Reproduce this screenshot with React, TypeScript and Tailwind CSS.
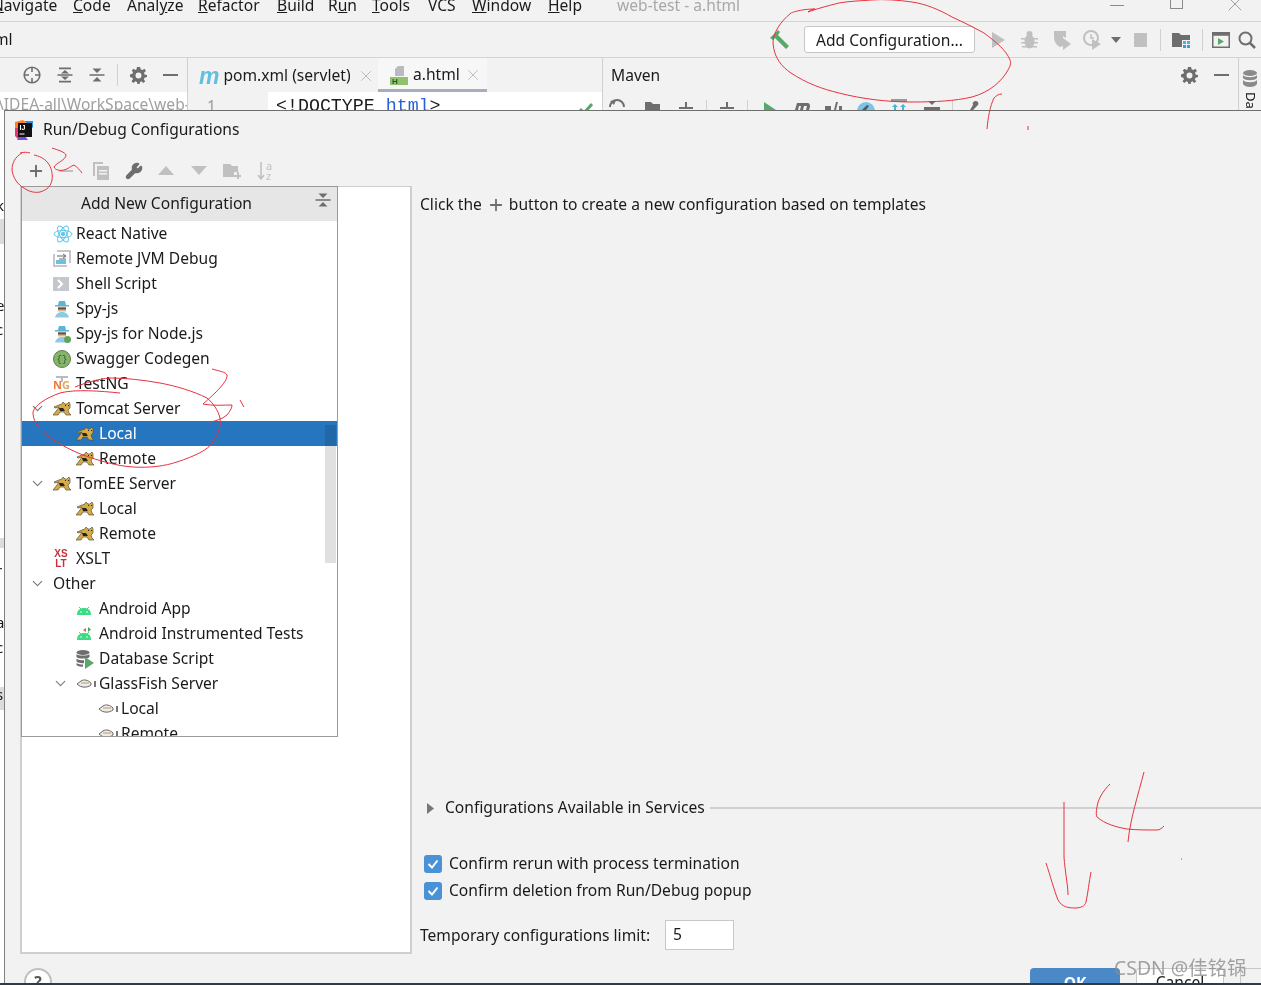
import React from 'react';
import { ChevronDown, Plus, Wrench, X } from 'lucide-react';

const font = { fontFamily: '"Noto Sans", "Noto Sans CJK SC", sans-serif' };

// --- small drawn icons ---
const TomcatIcon = () => (
  <svg width="18" height="14" viewBox="0 0 18 14">
    <path d="M9 2 L10 0 L12 2 H14 L16 0 L17 2 V6 L15 8 L16 11 L18 13 H13 L11 10 L7 10 L5 13 H0 L4 8 L6 5 L2 6 L1 5 L6 3 Z" fill="#d4aa4a" stroke="#5a5030" strokeWidth="0.7" />
    <path d="M6 6 L10 6 L12 9 L7 9 Z" fill="#26231a" />
    <path d="M12 3 H13 V4 H12 Z M15 3 H16 V4 H15 Z" fill="#26231a" />
  </svg>
);

const FishIcon = () => (
  <svg width="21" height="11" viewBox="0 0 21 11">
    <path d="M1 6 L5 3 C8 1 12 2 15 5 L15 7 C11 10 5 10 1 6 Z" fill="#ececec" stroke="#666" strokeWidth="1" />
    <path d="M5 5 H13" stroke="#d6b98a" strokeWidth="1.6" />
    <path d="M18 3 H20 V9 H18 Z" fill="#777" />
  </svg>
);

const ReactIcon = () => (
  <svg width="20" height="20" viewBox="0 0 20 20" fill="none" stroke="#5fc8ea" strokeWidth="1">
    <ellipse cx="10" cy="10" rx="9" ry="3.6" />
    <ellipse cx="10" cy="10" rx="9" ry="3.6" transform="rotate(60 10 10)" />
    <ellipse cx="10" cy="10" rx="9" ry="3.6" transform="rotate(120 10 10)" />
    <circle cx="10" cy="10" r="1.8" fill="#5fc8ea" />
  </svg>
);

const RemoteIcon = () => (
  <svg width="18" height="18" viewBox="0 0 18 18">
    <path d="M1 4 V16 H14 M4 1 H17 V13" fill="none" stroke="#b5b5b5" strokeWidth="1.5" />
    <rect x="3" y="10" width="10" height="4" fill="#6fc0e0" />
    <path d="M4 6 H12 M10 4 L13 6 L10 8 M13 9 H6" fill="none" stroke="#666" strokeWidth="1" />
  </svg>
);

const ShellIcon = () => (
  <svg width="16" height="14" viewBox="0 0 16 14">
    <rect x="0" y="0" width="16" height="14" fill="#c4c8cc" />
    <path d="M5 3 L9 7 L5 11" fill="none" stroke="#fff" strokeWidth="2" />
  </svg>
);

const SpyIcon = ({ dot }: { dot?: boolean }) => (
  <svg width="18" height="18" viewBox="0 0 18 18">
    <path d="M6 1 H12 L13 5 H16 V6.5 H2 V5 H5 Z" fill="#5ab5d6" />
    <rect x="5" y="6.5" width="8" height="5" fill="#e3b48e" />
    <rect x="5" y="7.5" width="8" height="2" fill="#555" />
    <path d="M2 17.5 C3 13.5 6 12 9 12 C12 12 15 13.5 16 17.5 Z" fill="#8ccbe2" />
    {dot && <circle cx="14.5" cy="14.5" r="3.5" fill="#62a35c" />}
  </svg>
);

const SwaggerIcon = () => (
  <svg width="18" height="18" viewBox="0 0 18 18">
    <circle cx="9" cy="9" r="8.5" fill="#85b56b" stroke="#5f7d55" strokeWidth="1" />
    <text x="9" y="12" textAnchor="middle" fontSize="9" fill="#2f4a2a" fontFamily="Liberation Mono, monospace">{'{}'}</text>
  </svg>
);

const TestNgIcon = () => (
  <div className="relative w-[18px] h-[15px] leading-none">
    <div className="absolute left-[3px] top-0 w-[12px] h-[2px] bg-[#bbb]" />
    <div className="absolute left-[8px] top-0 w-[2px] h-[6px] bg-[#bbb]" />
    <span className="absolute left-0 top-[3px] text-[11px] font-bold text-[#ee7a3a]">N</span>
    <span className="absolute left-[9px] top-[3px] text-[11px] font-bold text-[#e0a860]">G</span>
  </div>
);

const XsltIcon = () => (
  <div className="flex flex-col items-center text-[#c8303a] text-[10px] font-bold leading-[10px] w-[16px]" style={{ fontFamily: '"Liberation Sans", sans-serif' }}>
    <span>XS</span>
    <span>LT</span>
  </div>
);

const AndroidIcon = ({ badge }: { badge?: boolean }) => (
  <svg width="16" height="16" viewBox="0 0 16 16">
    <path d="M1 14 C1 9 4 7 8 7 C12 7 15 9 15 14 Z" fill="#3ddc84" />
    <path d="M3 6 L5 8 M13 6 L11 8" stroke="#3ddc84" strokeWidth="1" />
    <circle cx="5" cy="11" r="0.8" fill="#fff" />
    <circle cx="11" cy="11" r="0.8" fill="#fff" />
    {badge && <path d="M10 2 L7 4 L10 6 Z" fill="#e0603a" />}
    {badge && <path d="M12 1 L15 3.5 L12 6 Z" fill="#4f9e5a" />}
  </svg>
);

const DbScriptIcon = () => (
  <svg width="18" height="20" viewBox="0 0 18 20">
    <ellipse cx="7" cy="3.5" rx="6.5" ry="2.5" fill="#6e6e6e" />
    <path d="M0.5 5 V8 C2 10 12 10 13.5 8 V5 C12 7 2 7 0.5 5 Z" fill="#6e6e6e" />
    <path d="M0.5 9.5 V12.5 C2 14 6 14.5 8 14 V11 C5 11.5 2 11 0.5 9.5 Z" fill="#6e6e6e" />
    <path d="M0.5 14 V16 C2 17.5 5 18 7 17.5 V15.5 C5 15.5 2 15.5 0.5 14 Z" fill="#6e6e6e" />
    <path d="M9 8 L18 14 L9 20 Z" fill="#59a869" />
  </svg>
);

const GearIcon = ({ size = 17 }: { size?: number }) => (
  <svg width={size} height={size} viewBox="0 0 16 16" fill="#6e6e6e">
    <path fillRule="evenodd" d="M6.5 0 H9.5 L10 2.2 L11.6 2.9 L13.6 1.7 L15 3.8 L13.3 5.2 L13.6 7 L16 7.6 V9.4 L13.7 10 L13 11.6 L14.3 13.6 L12.4 15 L10.8 13.4 L9.5 14 L9 16 H7 L6.5 14 L5 13.4 L3.2 15 L1.4 13.4 L2.8 11.6 L2.2 10 L0 9.4 V7 L2.2 6.4 L2.9 5 L1.6 3.2 L3.4 1.6 L5 2.8 L6.2 2.2 Z M8 5.2 A2.8 2.8 0 1 0 8 10.8 A2.8 2.8 0 1 0 8 5.2 Z" />
  </svg>
);

const ExpandAllIcon = () => (
  <svg width="16" height="16" viewBox="0 0 16 16" fill="#6e6e6e">
    <path d="M2 0.5 H14 V2.2 H2 Z M8 3 L12 6.5 H4 Z M0.5 7.2 H15.5 V8.8 H0.5 Z M4 9.5 H12 L8 13 Z M2 13.8 H14 V15.5 H2 Z" />
  </svg>
);

const CollapseAllIcon = ({ color = '#6e6e6e' }: { color?: string }) => (
  <svg width="16" height="16" viewBox="0 0 16 16" fill={color}>
    <path d="M0.5 7.2 H15.5 V8.8 H0.5 Z M8 6 L3.5 1.5 H12.5 Z M3.5 14.5 L8 10 L12.5 14.5 Z" />
  </svg>
);

const TargetIcon = () => (
  <svg width="18" height="18" viewBox="0 0 18 18" fill="none" stroke="#6e6e6e" strokeWidth="1.6">
    <circle cx="9" cy="9" r="7.8" />
    <path d="M9 1 V6 M9 12 V17 M1 9 H6 M12 9 H17" />
  </svg>
);

// the Maven tool window's icon row, only its top part shows above the dialog
const MavenToolbar = () => (
  <svg width="380" height="18" viewBox="0 0 380 18" fill="#6e6e6e" className="shrink-0">
    <path d="M9 15 A7 7 0 1 1 23 15" fill="none" stroke="#6e6e6e" strokeWidth="2" transform="translate(-2 0)" />
    <path d="M7 9 L13 8 L11 13 Z" />
    <path d="M42 10 H48 L50 12 H57 V18 H42 Z" />
    <path d="M82 10 H84 V15 H90 V17 H76 V15 H82 Z" />
    <path d="M103 8 H104 V18 H103 Z" fill="#d0d0d0" />
    <path d="M123 10 H125 V15 H131 V17 H117 V15 H123 Z" />
    <path d="M144 8 H145 V18 H144 Z" fill="#d0d0d0" />
    <path d="M161 10 L173 18 H161 Z" fill="#59a869" />
    <path d="M192 18 L194 11 H204 C207 11 207 13 207 15 L206 18 H203 L204 14 H201 L200 18 H197 L198 14 H196 L195 18 Z" />
    <path d="M222 14 H228 V18 H222 Z M231 18 L233 10 H235 L233 18 Z M236 14 H239 V18 H236 Z" />
    <circle cx="263" cy="19" r="9" fill="#7cc4e6" />
    <path d="M264 13 L266 14 L263 18 H259 Z" fill="#4a5a66" />
    <rect x="288" y="7" width="16" height="3" fill="#9a9a9a" />
    <path d="M292 12 L295 15 H289 Z M300 12 L303 15 H297 Z M291 15 H293 V18 H291 Z M299 15 H301 V18 H299 Z" fill="#40b6e0" />
    <path d="M325 9 H333 L329 13 Z M321 15 H337 V18 H321 Z" />
    <path d="M349 8 H350 V18 H349 Z" fill="#d0d0d0" />
    <path d="M372 9 C375 9 376 11 375 13 L373 15 L370 18 H367 L370 13 C369 11 370 10 372 9 Z" />
  </svg>
);

const Minus = () => <div className="w-[15px] h-[2px] bg-[#6e6e6e]" />;
const Sep = () => <div className="w-px h-[22px] bg-[#d0d0d0]" />;

type Row = { label: string; level: 0 | 1 | 2; icon?: React.ReactNode; open?: boolean; selected?: boolean };

const rows: Row[] = [
  { label: 'React Native', level: 0, icon: <ReactIcon /> },
  { label: 'Remote JVM Debug', level: 0, icon: <RemoteIcon /> },
  { label: 'Shell Script', level: 0, icon: <ShellIcon /> },
  { label: 'Spy-js', level: 0, icon: <SpyIcon /> },
  { label: 'Spy-js for Node.js', level: 0, icon: <SpyIcon dot /> },
  { label: 'Swagger Codegen', level: 0, icon: <SwaggerIcon /> },
  { label: 'TestNG', level: 0, icon: <TestNgIcon /> },
  { label: 'Tomcat Server', level: 0, icon: <TomcatIcon />, open: true },
  { label: 'Local', level: 1, icon: <TomcatIcon />, selected: true },
  { label: 'Remote', level: 1, icon: <TomcatIcon /> },
  { label: 'TomEE Server', level: 0, icon: <TomcatIcon />, open: true },
  { label: 'Local', level: 1, icon: <TomcatIcon /> },
  { label: 'Remote', level: 1, icon: <TomcatIcon /> },
  { label: 'XSLT', level: 0, icon: <XsltIcon /> },
  { label: 'Other', level: 0, open: true },
  { label: 'Android App', level: 1, icon: <AndroidIcon /> },
  { label: 'Android Instrumented Tests', level: 1, icon: <AndroidIcon badge /> },
  { label: 'Database Script', level: 1, icon: <DbScriptIcon /> },
  { label: 'GlassFish Server', level: 1, icon: <FishIcon />, open: true },
  { label: 'Local', level: 2, icon: <FishIcon /> },
  { label: 'Remote', level: 2, icon: <FishIcon /> },
];

const levelPad = { 0: 'pl-[8px]', 1: 'pl-[31px]', 2: 'pl-[53px]' };

const TreeRow = ({ row }: { row: Row }) => (
  <div className={`h-[25px] shrink-0 flex items-center ${levelPad[row.level]} ${row.selected ? 'bg-[#2675bf] text-white' : ''}`}>
    <div className="w-[23px] shrink-0">
      {row.open && <ChevronDown size={17} strokeWidth={1.6} className="text-[#777] -ml-px" />}
    </div>
    {row.icon ? (
      <div className="w-[23px] shrink-0 flex items-center">{row.icon}</div>
    ) : null}
    <span>{row.label}</span>
  </div>
);

const ConfigPopup = () => (
  <div className="absolute left-[16px] top-[75px] w-[317px] h-[551px] bg-white border border-[#9a9a9a] overflow-hidden text-[#1a1a1a]">
    <div className="relative h-[34px] bg-[#e6e6e6] flex items-center justify-center pr-[26px]">
      <span>Add New Configuration</span>
      <div className="absolute right-[6px] top-[5px]">
        <CollapseAllIcon />
      </div>
    </div>
    {rows.map((row, i) => (
      <TreeRow key={i} row={row} />
    ))}
    {/* scrollbar */}
    <div className="absolute left-[303px] top-[238px] w-[11px] h-[138px] bg-[#e0e0e0] mix-blend-multiply" />
  </div>
);

const Menu = ({ pre, u, post, w }: { pre?: string; u: string; post?: string; w: string }) => (
  <span className={`shrink-0 ${w}`}>
    {pre}
    <span className="underline">{u}</span>
    {post}
  </span>
);

// scraps of the window behind the dialog, visible in the 4px left of it
const behind = [
  { h: 88 },
  { h: 16, ch: 'k' },
  { h: 5 },
  { h: 25, gray: true },
  { h: 54 },
  { h: 16, ch: 'e' },
  { h: 8 },
  { h: 16, ch: 'c' },
  { h: 200 },
  { h: 10, gray: true },
  { h: 15 },
  { h: 14, ch: 'r' },
  { h: 38 },
  { h: 15, ch: 'a' },
  { h: 10 },
  { h: 15, ch: 'c' },
  { h: 15 },
  { h: 14, ch: ')' },
  { h: 3 },
  { h: 23, gray: true, ch: 's' },
];

const Annotations = () => (
  <svg className="absolute left-0 top-0 pointer-events-none" width="1261" height="985" fill="none" stroke="#e8323f" strokeWidth="1">
    <path d="M808 12 C812 9 815 9 815 9 C800 9 791 13 791 13 C780 22 773 33 773 43 C774 58 782 67 791 73 C806 83 822 89 839 93 C862 99 888 102 912 102 C935 102 955 101 972 97 C990 92 1002 81 1008 70 C1011 65 1011 62 1010 60 C1006 50 996 42 984 33 C973 27 963 22 952 17 C940 10 926 4 912 2 C898 0 884 -1 871 0 C860 1 850 1 839 3 C827 6 816 9 808 12" />
    <path d="M1002 94 C998 94 996 96 994 98 C990 106 988 118 987 129" />
    <path d="M1028 126 V130" />
    <path d="M20 153 C24 152 27 152 30 153 M22 153 C15 157 12 163 12 170 C13 178 18 185 24 188 C29 192 36 193 40 192 C47 190 51 186 52 180 C53 173 51 167 48 163 C44 158 39 156 34 155" />
    <path d="M52 148 C58 150 65 152 66 155 C66 160 56 163 54 167 C55 170 60 171 64 170 C68 169 71 166 74 165 C77 167 80 170 82 173" />
    <path d="M120 393 C100 391 75 389 60 393 C46 398 35 405 33 412 C33 420 37 427 43 432 C55 442 70 450 83 455 C100 461 117 466 133 467 C150 468 165 466 177 462 C195 456 208 450 213 442 C219 433 221 425 220 418 C218 410 213 403 207 398 C193 391 176 386 160 383 C143 380 126 378 110 378 C98 379 85 383 75 387" />
    <path d="M212 369 C219 371 226 372 227 375 C228 382 212 396 203 404 C212 406 224 405 232 405 C232 409 229 412 227 415 C222 419 216 421 210 422" />
    <path d="M240 400 L244 407" />
    <path d="M1064 802 V857 C1065 872 1068 885 1068 895" />
    <path d="M1046 863 C1050 875 1054 890 1058 900 C1062 907 1068 908 1075 908 C1081 908 1085 906 1086 902 C1088 893 1089 882 1091 872" />
    <path d="M1110 784 C1103 791 1098 799 1097 807 C1096 812 1096 815 1097 817 C1105 824 1116 827 1127 829 C1137 830 1147 830 1157 830 C1160 830 1162 828 1164 826" />
    <path d="M1144 772 C1138 795 1130 820 1128 842" />
    <path d="M1181 859 H1182" />
  </svg>
);

export default function App() {
  return (
    <div className="relative w-[1261px] h-[985px] overflow-hidden bg-[#f2f2f2] flex flex-col text-[15.6px] text-[#1a1a1a] border-b-2 border-[#2f3b47]" style={font}>
      {/* menu bar, cut by the top of the capture */}
      <div className="h-[22px] shrink-0 border-b border-[#d4d4d4] relative overflow-hidden">
        <div className="flex items-center h-[12px] -ml-[8px] whitespace-nowrap">
          <Menu u="N" post="avigate" w="w-[81px]" />
          <Menu u="C" post="ode" w="w-[54px]" />
          <Menu pre="Anal" u="y" post="ze" w="w-[71px]" />
          <Menu u="R" post="efactor" w="w-[79px]" />
          <Menu u="B" post="uild" w="w-[51px]" />
          <Menu pre="R" u="u" post="n" w="w-[44px]" />
          <Menu u="T" post="ools" w="w-[56px]" />
          <Menu pre="VCS" u="" w="w-[44px]" />
          <Menu u="W" post="indow" w="w-[76px]" />
          <Menu u="H" post="elp" w="w-[69px]" />
          <span className="text-[#a8a8a8]">web-test - a.html</span>
          <div className="ml-auto flex items-center">
            <div className="w-[14px] h-px bg-[#8a8a8a] mr-[46px] -mt-[2px]" />
            <div className="w-[13px] h-[16px] -mt-[10px] border border-[#8a8a8a] mr-[40px]" />
            <X size={24} strokeWidth={0.8} className="text-[#8a8a8a] mr-[14px] -mt-[4px]" />
          </div>
        </div>
      </div>

      {/* nav bar + run toolbar */}
      <div className="h-[36px] shrink-0 border-b border-[#d4d4d4] flex items-center">
        <span className="-ml-[6px]">ml</span>
        <div className="ml-auto flex items-center">
          <svg width="20" height="20" viewBox="0 0 20 20" className="mr-[14px]">
            <path d="M0 8 L8 0 L10 2 L8 5 L19 16 L16 19 L5 8 L3 10 Z" fill="#59a869" />
          </svg>
          <div className="w-[171px] h-[27px] mr-[16px] pt-[2px] bg-white border border-[#c6c6c6] rounded-[3px] flex items-center justify-center">
            Add Configuration...
          </div>
          <svg width="14" height="16" viewBox="0 0 14 16" className="mr-[16px]"><path d="M1 0 L14 8 L1 16 Z" fill="#c0c0c0" /></svg>
          <svg width="17" height="18" viewBox="0 0 17 18" fill="#c0c0c0" className="mr-[15px]">
            <ellipse cx="8.5" cy="10.5" rx="5" ry="7" />
            <circle cx="8.5" cy="3" r="3" />
            <path d="M0 7 H17 V8.5 H0 Z M0 11 H17 V12.5 H0 Z M1 15 H16 V16.5 H1 Z" />
          </svg>
          <svg width="18" height="20" viewBox="0 0 18 20" fill="#c0c0c0" className="mr-[12px]">
            <path d="M1 1 H13 V8 L10 6 V16 L7 17 C3 15 1 11 1 7 Z" />
            <path d="M10 8 L18 14 L10 20 Z" />
          </svg>
          <svg width="18" height="20" viewBox="0 0 18 20" className="mr-[10px]">
            <circle cx="8" cy="8" r="7" fill="none" stroke="#c0c0c0" strokeWidth="2" />
            <path d="M8 4 V8 H11" fill="none" stroke="#c0c0c0" strokeWidth="1.5" />
            <path d="M9 9 L18 14 L9 20 Z" fill="#c0c0c0" />
          </svg>
          <svg width="10" height="6" viewBox="0 0 10 6" className="mr-[13px]"><path d="M0 0 H10 L5 6 Z" fill="#6e6e6e" /></svg>
          <div className="w-[13px] h-[14px] bg-[#c0c0c0] mr-[13px]" />
          <Sep />
          <svg width="19" height="18" viewBox="0 0 19 18" className="mx-[11px]">
            <path d="M0 2 H7 L9 4 H18 V9 H10 V16 H0 Z" fill="#6e6e6e" />
            <rect x="11" y="10" width="3" height="3" fill="#40b6e0" />
            <rect x="15" y="10" width="3" height="3" fill="#40b6e0" />
            <rect x="11" y="14" width="3" height="3" fill="#389fd6" />
            <rect x="15" y="14" width="3" height="3" fill="#389fd6" />
          </svg>
          <Sep />
          <svg width="18" height="16" viewBox="0 0 18 16" className="ml-[9px] mr-[8px]">
            <rect x="0.75" y="0.75" width="16.5" height="14.5" fill="none" stroke="#6e6e6e" strokeWidth="1.5" />
            <rect x="0.75" y="0.75" width="16.5" height="3" fill="#6e6e6e" />
            <path d="M6 6 L12 9.5 L6 13 Z" fill="#59a869" />
          </svg>
          <svg width="18" height="18" viewBox="0 0 18 18" fill="none" stroke="#6e6e6e" strokeWidth="2" className="mr-[5px]">
            <circle cx="7.5" cy="7.5" r="6" />
            <path d="M12 12 L17 17" strokeWidth="2.5" />
          </svg>
        </div>
      </div>

      {/* tool windows peeking out above the dialog */}
      <div className="h-[52px] shrink-0 flex overflow-hidden">
        <div className="w-[187px] shrink-0 flex flex-col">
          <div className="h-[34px] flex items-center pl-[23px]">
            <TargetIcon />
            <div className="ml-[16px]"><ExpandAllIcon /></div>
            <div className="ml-[16px]"><CollapseAllIcon /></div>
            <div className="ml-[12px]"><Sep /></div>
            <div className="ml-[12px]"><GearIcon /></div>
            <div className="ml-[16px]"><Minus /></div>
          </div>
          <div className="h-[18px] bg-white text-[#a0a0a0] whitespace-nowrap overflow-hidden leading-[24px] -ml-[2px]">\IDEA-all\WorkSpace\web-</div>
        </div>
        <div className="w-[416px] shrink-0 flex flex-col border-l border-r border-t border-[#d0d0d0] -mt-px">
          <div className="h-[34px] flex">
            <div className="w-[190px] flex items-center pl-[11px] pt-[2px]">
              <span className="text-[23px] leading-none italic font-bold text-[#62bfe0] mr-[4px]" style={{ fontFamily: '"Liberation Sans", sans-serif' }}>m</span>
              <span>pom.xml (servlet)</span>
              <X size={18} strokeWidth={1.2} className="ml-[6px] text-[#b5b5b5]" />
            </div>
            <div className="w-[109px] flex items-center pl-[12px] pt-[3px] bg-[#f7f7f7] border-b-[3px] border-[#a8adbd]">
              <svg width="18" height="20" viewBox="0 0 18 20" className="mr-[5px]">
                <path d="M8 1 H14 V11 H5 V4 Z" fill="#b8bcbf" />
                <rect x="0" y="12" width="18" height="8" fill="#8fc16f" />
                <text x="2" y="19" fontSize="8" fontWeight="700" fill="#2d5a2d" fontFamily="Liberation Sans, sans-serif">H</text>
              </svg>
              <span>a.html</span>
              <X size={18} strokeWidth={1.2} className="ml-[4px] text-[#b5b5b5]" />
            </div>
          </div>
          <div className="h-[18px] flex">
            <div className="w-[80px] pl-[19px] text-[#9a9a9a] leading-[28px]">1</div>
            <div className="flex-1 bg-white pl-[8px] flex justify-between pr-[9px] text-[18.3px] leading-[28px] whitespace-pre" style={{ fontFamily: '"Liberation Mono", monospace' }}>
              <span>{'<!DOCTYPE '}<span className="text-[#2a5fd6]">html</span>{'>'}</span>
              <svg width="14" height="14" viewBox="0 0 14 14" className="mt-[10px]"><path d="M1 7 L5 11 L13 2" fill="none" stroke="#59a869" strokeWidth="3" /></svg>
            </div>
          </div>
        </div>
        <div className="flex-1 flex flex-col">
          <div className="h-[34px] flex items-center pl-[8px] pr-[9px]">
            <span className="pt-[2px]">Maven</span>
            <div className="ml-auto"><GearIcon /></div>
            <div className="ml-[16px]"><Minus /></div>
          </div>
          <div className="h-[18px] flex overflow-hidden">
            <MavenToolbar />
          </div>
        </div>
        <div className="w-[23px] shrink-0 border-l border-[#d0d0d0] flex flex-col items-center pt-[13px] -mt-px">
          <svg width="14" height="18" viewBox="0 0 14 18" fill="#8a8a8a">
            <ellipse cx="7" cy="3" rx="7" ry="3" />
            <path d="M0 5 C2 8 12 8 14 5 V8 C12 11 2 11 0 8 Z M0 10 C2 13 12 13 14 10 V14 C12 18 2 18 0 14 Z" />
          </svg>
          <span className="text-[13px] rotate-90 mt-[6px] leading-none">Da</span>
        </div>
      </div>

      {/* dialog */}
      <div className="flex-1 flex min-h-0">
        <div className="w-[4px] shrink-0 overflow-hidden flex flex-col bg-white">
          {behind.map((b, i) => (
            <div key={i} className={`shrink-0 whitespace-nowrap text-[15px] leading-none ${b.gray ? 'bg-[#dcdcdc]' : ''}`} style={{ height: b.h }}>
              {b.ch && <span className="block -ml-[4px]">{b.ch}</span>}
            </div>
          ))}
        </div>
        <div className="relative flex-1 flex flex-col min-w-0 bg-[#f2f2f2] border-l border-t border-l-[#808080] border-t-[#6e6e6e]">
          <div className="h-[38px] shrink-0 flex items-center pl-[9px]">
            <svg width="20" height="20" viewBox="0 0 20 20" className="mr-[9px]">
              <path d="M1 2 L9 0 L12 3 L6 10 L1 9 Z" fill="#fc801d" />
              <path d="M1 8 L7 8 L5 20 L1 16 Z" fill="#e8336e" />
              <path d="M3 20 L8 12 L14 20 Z" fill="#7b4ce0" />
              <path d="M10 1 L19 1 L19 8 Z" fill="#2d8fe0" />
              <rect x="4" y="3" width="14" height="14" fill="#111" />
              <text x="5.5" y="10" fontSize="7" fontWeight="700" fill="#fff" fontFamily="Liberation Sans, sans-serif">IJ</text>
              <rect x="5.5" y="13.5" width="5" height="1" fill="#fff" />
            </svg>
            <span>Run/Debug Configurations</span>
          </div>

          <div className="h-[37px] shrink-0 flex items-center pl-[22px] pt-[6px]">
            <Plus size={18} strokeWidth={2.6} className="text-[#6e6e6e]" />
            <div className="w-[14px] h-[2px] bg-[#c0c0c0] ml-[14px]" />
            <svg width="16" height="18" viewBox="0 0 16 18" className="ml-[20px]" fill="#c0c0c0">
              <path d="M0 0 H10 V2 H2 V14 H0 Z" />
              <path d="M4 4 H16 V18 H4 Z M6 8 V9.5 H14 V8 Z M6 11 V12.5 H14 V11 Z" fillRule="evenodd" />
            </svg>
            <Wrench size={18} className="text-[#6e6e6e] fill-[#6e6e6e] ml-[16px]" />
            <svg width="16" height="9" viewBox="0 0 16 9" className="ml-[15px]"><path d="M8 0 L16 9 H0 Z" fill="#c0c0c0" /></svg>
            <svg width="16" height="9" viewBox="0 0 16 9" className="ml-[17px]"><path d="M0 0 H16 L8 9 Z" fill="#c0c0c0" /></svg>
            <svg width="18" height="16" viewBox="0 0 18 16" className="ml-[16px]" fill="#c0c0c0">
              <path d="M0 1 H7 L9 3 H15 V9 H11 V14 H0 Z" />
              <path d="M14 9 H16 V12 H18 V14 H16 V16 H14 V14 H11 V12 H14 Z" />
            </svg>
            <div className="ml-[16px] relative w-[18px] h-[18px] text-[#c0c0c0] leading-none">
              <svg width="8" height="18" viewBox="0 0 8 18" fill="none" stroke="#c0c0c0" strokeWidth="1.5"><path d="M4 0 V16 M1 13 L4 17 L7 13" /></svg>
              <span className="absolute left-[9px] -top-[2px] text-[11px]">a</span>
              <span className="absolute left-[9px] top-[8px] text-[11px]">z</span>
            </div>
          </div>

          <div className="flex-1 flex min-h-0">
            <div className="ml-[15px] w-[392px] h-[768px] shrink-0 bg-white border-r-2 border-b-2 border-l-2 border-t border-[#cfcfcf]" />
            <div className="flex-1 min-w-0 pl-[8px] flex flex-col h-[768px]">
              <div className="shrink-0 mt-[7px] flex items-center h-[24px] whitespace-nowrap">
                Click the
                <Plus size={18} strokeWidth={2.4} className="text-[#6e6e6e] ml-[5px] mr-[4px]" />
                button to create a new configuration based on templates
              </div>
              <div className="shrink-0 mt-[579px] flex items-center h-[24px] whitespace-nowrap">
                <svg width="7" height="11" viewBox="0 0 7 11" className="ml-[7px] mr-[11px]"><path d="M0 0 L7 5.5 L0 11 Z" fill="#777" /></svg>
                <span>Configurations Available in Services</span>
                <div className="flex-1 h-[2px] bg-[#d0d0d0] ml-[5px]" />
              </div>
              <div className="shrink-0 mt-[30px] flex items-center h-[27px] pl-[4px]">
                <div className="w-[18px] h-[18px] rounded-[3px] bg-[#4a92d6] flex items-center justify-center mr-[7px]">
                  <svg width="12" height="12" viewBox="0 0 12 12"><path d="M1.5 6 L5 9.5 L10.5 2.5" fill="none" stroke="#fff" strokeWidth="2" /></svg>
                </div>
                Confirm rerun with process termination
              </div>
              <div className="shrink-0 flex items-center h-[27px] pl-[4px]">
                <div className="w-[18px] h-[18px] rounded-[3px] bg-[#4a92d6] flex items-center justify-center mr-[7px]">
                  <svg width="12" height="12" viewBox="0 0 12 12"><path d="M1.5 6 L5 9.5 L10.5 2.5" fill="none" stroke="#fff" strokeWidth="2" /></svg>
                </div>
                Confirm deletion from Run/Debug popup
              </div>
              <div className="shrink-0 mt-[16px] flex items-center">
                <span className="pt-[2px]">Temporary configurations limit:</span>
                <div className="ml-[15px] w-[69px] h-[30px] bg-white border border-[#c8c8c8] flex items-center pl-[7px]">5</div>
              </div>
            </div>
          </div>

          {/* footer buttons, cut off by the bottom edge */}
          <div className="h-[29px] shrink-0 flex pt-[14px] pl-[19px] overflow-hidden">
            <div className="w-[28px] h-[28px] rounded-full bg-white border-2 border-[#c0c0c0] flex items-start justify-center leading-[24px] font-bold text-[#555]">?</div>
            <div className="ml-auto w-[90px] h-[30px] rounded-t-[4px] bg-[#4a88c7] text-white font-bold text-center leading-[30px]">OK</div>
            <div className="ml-[16px] w-[88px] h-[30px] bg-white border border-[#c8c8c8] rounded-t-[3px] text-center leading-[26px]">Cancel</div>
            <div className="ml-[16px] w-[21px] h-[30px] border-l border-t border-[#c8c8c8]" />
          </div>

          <ConfigPopup />
        </div>
      </div>

      <Annotations />
      <span className="absolute left-[1114px] top-[953px] text-[19.4px] text-[#8c8c8c]/80 whitespace-nowrap" style={font}>CSDN @佳铭锅</span>
    </div>
  );
}
